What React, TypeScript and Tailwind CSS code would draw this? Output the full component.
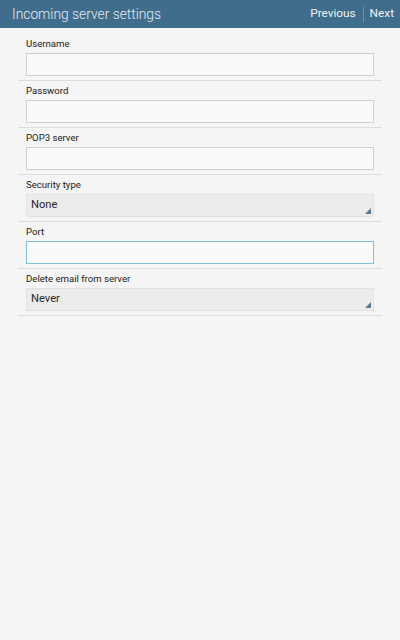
import React from "react";

const font = { fontFamily: "Roboto, 'Noto Sans', sans-serif" };

type Field = { label: string; kind: "input" | "select" | "focus"; value?: string };

const fields: Field[] = [
  { label: "Username", kind: "input" },
  { label: "Password", kind: "input" },
  { label: "POP3 server", kind: "input" },
  { label: "Security type", kind: "select", value: "None" },
  { label: "Port", kind: "focus" },
  { label: "Delete email from server", kind: "select", value: "Never" },
];

const Row = ({ f }: { f: Field }) => {
  return (
    <div className="border-b border-[#dcdcdc] pb-[4px]">
      <div className="h-[19px] px-[8px] pt-[1px] flex items-center text-[9.6px] text-[#1a1a1a]">
        {f.label}
      </div>
      <div className="px-[8px]">
        {f.kind === "select" ? (
          <div className="relative h-[23px] bg-[#ececec] border border-[#e2e2e2] flex items-center pl-[4px] text-[11.2px] text-[#2a2a2a]">
            {f.value}
            <svg className="absolute right-[2px] bottom-[2px]" width="6" height="6" viewBox="0 0 6 6">
              <polygon points="6,0 6,6 0,6" fill="#557a92" />
            </svg>
          </div>
        ) : f.kind === "focus" ? (
          <div className="h-[23px] bg-[#f9fbfb] border-[1.5px] border-[#7ec1d8]" />
        ) : (
          <div className="h-[23px] bg-[#f9f9f9] border border-[#cfcfcf]" />
        )}
      </div>
    </div>
  );
};

export default function App() {
  return (
    <div className="w-[400px] h-[640px] bg-[#f5f5f5] overflow-hidden" style={font}>
      <div className="h-[28px] bg-[#416d8c] flex items-center justify-between pl-[12px] pr-[6px]">
        <span className="text-[13.8px] font-light text-[#e3ebf1]">
          Incoming server settings
        </span>
        <div className="flex items-center text-[11.8px] text-[#eef3f6]">
          <span className="pr-[7px]">Previous</span>
          <span className="w-px h-[15px] bg-[#6d8ea5]" />
          <span className="pl-[6px]">Next</span>
        </div>
      </div>
      <div className="px-[18px] pt-[6px]">
        {fields.map((f) => (
          <Row key={f.label} f={f} />
        ))}
      </div>
    </div>
  );
}
